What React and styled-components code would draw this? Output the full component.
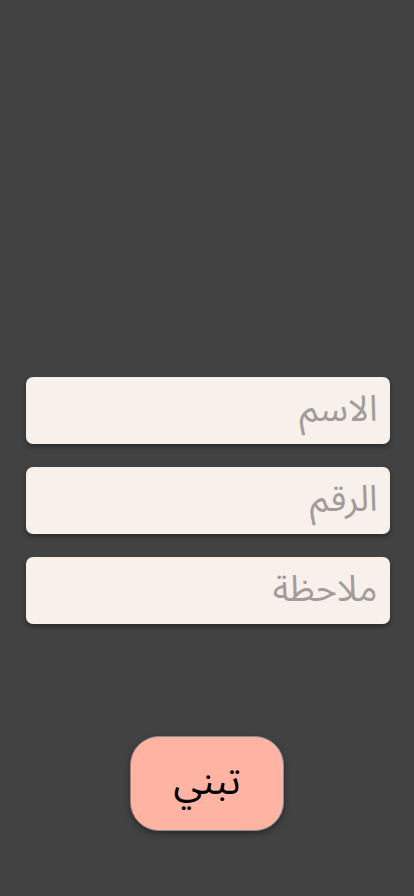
import React, { useState } from 'react';
import styled, { createGlobalStyle } from 'styled-components';

const GlobalStyle = createGlobalStyle`
  html, body {
    margin: 0;
    padding: 0;
    background: #424242;
  }
  * { box-sizing: border-box; }
`;

const Screen = styled.div`
  width: 414px;
  height: 896px;
  background: #424242;
  display: flex;
  flex-direction: column;
  align-items: center;
  padding-top: 377px;
  direction: rtl;
  font-family: "Noto Sans Arabic", "DejaVu Sans", "Noto Sans", sans-serif;
`;

const Form = styled.div`
  display: flex;
  flex-direction: column;
  gap: 23px;
  width: 364px;
  margin-left: 1px;
`;

const Field = styled.input`
  width: 100%;
  height: 67px;
  border: none;
  outline: none;
  border-radius: 7px;
  background: #f8f1eb;
  box-shadow: 0 3px 5px rgba(0, 0, 0, 0.35);
  padding: 0 12px 2px;
  font-family: inherit;
  font-size: 36px;
  color: #333;
  direction: rtl;

  &::placeholder {
    color: #a39c9a;
  }
`;

const AdoptButton = styled.button`
  margin-top: 112px;
  width: 154px;
  height: 95px;
  border-radius: 29px;
  border: 1px solid #8a8a8a;
  background: #ffb3a3;
  box-shadow: 0 3px 6px rgba(0, 0, 0, 0.35);
  font-family: inherit;
  font-size: 39px;
  color: #000;
  cursor: pointer;
  padding: 0 0 4px;
`;

const App = () => {
  const [name, setName] = useState('');
  const [phone, setPhone] = useState('');
  const [note, setNote] = useState('');

  return (
    <>
      <GlobalStyle />
      <Screen>
        <Form>
          <Field placeholder="الاسم" value={name} onChange={(e) => setName(e.target.value)} />
          <Field placeholder="الرقم" value={phone} onChange={(e) => setPhone(e.target.value)} />
          <Field placeholder="ملاحظة" value={note} onChange={(e) => setNote(e.target.value)} />
        </Form>
        <AdoptButton>تبني</AdoptButton>
      </Screen>
    </>
  );
};

export default App;
